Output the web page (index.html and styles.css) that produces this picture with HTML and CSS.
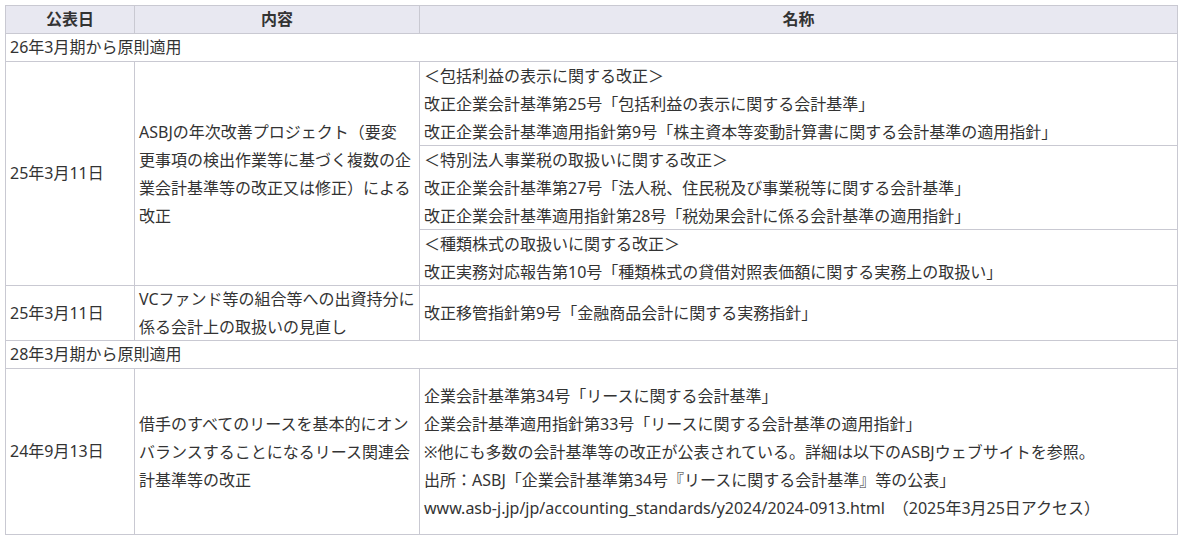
FILE: index.html
```html
<!DOCTYPE html>
<html lang="ja">
<head>
<meta charset="utf-8">
<title>会計基準の公表</title>
<link rel="stylesheet" href="styles.css">
</head>
<body>
<table class="std-table">
  <colgroup>
    <col class="col-date">
    <col class="col-content">
    <col class="col-name">
  </colgroup>
  <thead>
    <tr>
      <th>公表日</th>
      <th>内容</th>
      <th>名称</th>
    </tr>
  </thead>
  <tbody>
    <tr>
      <td colspan="3" class="section">26年3月期から原則適用</td>
    </tr>
    <tr>
      <td rowspan="3">25年3月11日</td>
      <td rowspan="3"><div class="lines">ASBJの年次改善プロジェクト（要変<br>更事項の検出作業等に基づく複数の企<br>業会計基準等の改正又は修正）による<br>改正</div></td>
      <td class="name"><div class="lines">＜包括利益の表示に関する改正＞<br>改正企業会計基準第25号「包括利益の表示に関する会計基準」<br>改正企業会計基準適用指針第9号「株主資本等変動計算書に関する会計基準の適用指針」</div></td>
    </tr>
    <tr>
      <td class="name"><div class="lines">＜特別法人事業税の取扱いに関する改正＞<br>改正企業会計基準第27号「法人税、住民税及び事業税等に関する会計基準」<br>改正企業会計基準適用指針第28号「税効果会計に係る会計基準の適用指針」</div></td>
    </tr>
    <tr>
      <td class="name"><div class="lines">＜種類株式の取扱いに関する改正＞<br>改正実務対応報告第10号「種類株式の貸借対照表価額に関する実務上の取扱い」</div></td>
    </tr>
    <tr>
      <td>25年3月11日</td>
      <td><div class="lines lines-pair">VCファンド等の組合等への出資持分に<br>係る会計上の取扱いの見直し</div></td>
      <td class="name">改正移管指針第9号「金融商品会計に関する実務指針」</td>
    </tr>
    <tr>
      <td colspan="3" class="section">28年3月期から原則適用</td>
    </tr>
    <tr class="tall">
      <td>24年9月13日</td>
      <td><div class="lines">借手のすべてのリースを基本的にオン<br>バランスすることになるリース関連会<br>計基準等の改正</div></td>
      <td class="name"><div class="lines">企業会計基準第34号「リースに関する会計基準」<br>企業会計基準適用指針第33号「リースに関する会計基準の適用指針」<br>※他にも多数の会計基準等の改正が公表されている。詳細は以下のASBJウェブサイトを参照。<br>出所：ASBJ「企業会計基準第34号『リースに関する会計基準』等の公表」<br>www.asb-j.jp/jp/accounting_standards/y2024/2024-0913.html　（2025年3月25日アクセス）</div></td>
    </tr>
  </tbody>
</table>
</body>
</html>
```

FILE: styles.css
```css
html, body {
  margin: 0;
  padding: 0;
  background: #ffffff;
}

body {
  padding: 5px;
  font-family: "Noto Sans", "Noto Sans CJK JP", sans-serif;
  font-size: 16px;
  color: #333333;
}

.std-table {
  border-collapse: collapse;
  table-layout: fixed;
  width: 1172px;
}

.col-date { width: 129px; }
.col-content { width: 285px; }
.col-name { width: 758px; }

.std-table th,
.std-table td {
  border: 1px solid #c9c9d2;
  padding: 0 4px;
  line-height: 27px;
  vertical-align: middle;
  text-align: left;
  white-space: nowrap;
}

.std-table th {
  background: #e8e8f1;
  font-weight: bold;
  text-align: center;
}

.lines {
  line-height: 28px;
  margin-bottom: -1px;
}

.lines-pair {
  margin-top: -1px;
}

.std-table .tall td {
  height: 165px;
}
```
